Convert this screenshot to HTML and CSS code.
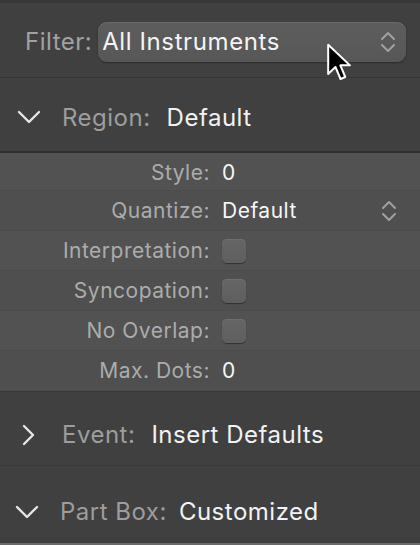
FILE: index.html
```html
<!DOCTYPE html>
<html lang="en">
<head>
    <meta charset="UTF-8">
    <meta name="viewport" content="width=device-width, initial-scale=1.0">
    <title>Score Inspector</title>
    <link rel="stylesheet" href="styles.css">
</head>
<body>
    <div class="inspector">
        <div class="filter-bar">
            <span class="filter-label">Filter:</span>
            <div class="popup">
                <span>All Instruments</span>
                <svg class="updown" width="16" height="24" viewBox="0 0 16 24">
                    <path d="M2 9 L8 3 L14 9 M2 15 L8 21 L14 15" fill="none" stroke="#a0a0a0" stroke-width="2" stroke-linecap="round" stroke-linejoin="round"/>
                </svg>
            </div>
        </div>

        <div class="section-header region">
            <svg class="disclosure" width="24" height="14" viewBox="0 0 24 14">
                <path d="M2 2 L12 12 L22 2" fill="none" stroke="#e6e6e6" stroke-width="2.4" stroke-linecap="round" stroke-linejoin="round"/>
            </svg>
            <span class="section-label">Region:</span>
            <span class="section-value">Default</span>
        </div>

        <div class="params">
            <div class="param-row">
                <span class="param-label">Style:</span>
                <span class="param-value">0</span>
            </div>
            <div class="param-row">
                <span class="param-label">Quantize:</span>
                <span class="param-value">Default</span>
                <svg class="updown" width="16" height="24" viewBox="0 0 16 24">
                    <path d="M2 9 L8 3 L14 9 M2 15 L8 21 L14 15" fill="none" stroke="#a0a0a0" stroke-width="2" stroke-linecap="round" stroke-linejoin="round"/>
                </svg>
            </div>
            <div class="param-row">
                <span class="param-label">Interpretation:</span>
                <span class="checkbox"></span>
            </div>
            <div class="param-row">
                <span class="param-label">Syncopation:</span>
                <span class="checkbox"></span>
            </div>
            <div class="param-row">
                <span class="param-label">No Overlap:</span>
                <span class="checkbox"></span>
            </div>
            <div class="param-row">
                <span class="param-label">Max. Dots:</span>
                <span class="param-value">0</span>
            </div>
        </div>

        <div class="section-header event">
            <svg class="disclosure closed" width="24" height="22" viewBox="0 0 24 22">
                <path d="M7 2 L16 11 L7 20" fill="none" stroke="#e6e6e6" stroke-width="2.4" stroke-linecap="round" stroke-linejoin="round"/>
            </svg>
            <span class="section-label">Event:</span>
            <span class="section-value">Insert Defaults</span>
        </div>

        <div class="section-header partbox">
            <svg class="disclosure" width="24" height="14" viewBox="0 0 24 14">
                <path d="M2 2 L12 12 L22 2" fill="none" stroke="#e6e6e6" stroke-width="2.4" stroke-linecap="round" stroke-linejoin="round"/>
            </svg>
            <span class="section-label">Part Box:</span>
            <span class="section-value">Customized</span>
        </div>

        <!-- mouse pointer resting on the filter popup -->
        <svg class="pointer" width="28" height="40" viewBox="0 0 15 22">
            <path d="M1 1 L1 17 L5 13.2 L7.8 19.8 L10.4 18.7 L7.7 12.3 L13 12.3 Z" fill="#000" stroke="#fff" stroke-width="1.1" stroke-linejoin="round"/>
        </svg>
    </div>
</body>
</html>
```

FILE: styles.css
```css
body {
    margin: 0;
    background-color: #404040;
    font-family: 'Inter', 'Noto Sans', sans-serif;
}
.inspector {
    position: relative;
    width: 420px;
    height: 545px;
    background-color: #404040;
    border-top: 3px solid #373737;
    border-bottom: 2px solid #6a6a6a;
    box-sizing: border-box;
    overflow: hidden;
}
.filter-bar {
    height: 75px;
    display: flex;
    align-items: center;
    padding: 3px 14px 0 25px;
    box-sizing: border-box;
    border-bottom: 1px solid #363636;
}
.filter-label {
    color: #a2a2a2;
    font-size: 24px;
    letter-spacing: 0.5px;
    margin-right: 6px;
}
.popup {
    flex: 1;
    height: 40px;
    display: flex;
    align-items: center;
    justify-content: space-between;
    padding: 0 10px 0 4px;
    background: linear-gradient(#5d5d5d, #575757);
    border-radius: 9px;
    box-shadow: inset 0 1px 0 #6a6a6a, 0 1px 2px rgba(0, 0, 0, 0.35);
    color: #f4f4f4;
    font-size: 24px;
    letter-spacing: 0.6px;
}
.section-header {
    display: flex;
    align-items: center;
    height: 75px;
    box-sizing: border-box;
    font-size: 24px;
    letter-spacing: 0.5px;
}
.region {
    border-bottom: 2px solid #2f2f2f;
    padding-top: 5px;
}
.event {
    border-top: 1px solid #383838;
    border-bottom: 1px solid #393939;
    padding-top: 12px;
}
.partbox {
    height: 73px;
    padding-top: 18px;
}
.disclosure {
    width: 24px;
    margin-left: 17px;
    margin-right: 21px;
}
.partbox .disclosure {
    margin-left: 15px;
    margin-right: 21px;
}
.section-label {
    color: #9d9d9d;
    margin-right: 16px;
}
.partbox .section-label {
    margin-right: 12px;
}
.section-value {
    color: #f2f2f2;
}
.params {
    background-color: #525252;
}
.param-row {
    display: grid;
    grid-template-columns: 210px 1fr auto;
    align-items: center;
    column-gap: 12px;
    height: 40px;
    padding-right: 23px;
    font-size: 21px;
    letter-spacing: 0.5px;
    border-bottom: 1px solid #4c4c4c;
    box-sizing: border-box;
}
.param-row:first-child {
    height: 38px;
    padding-top: 2px;
}
.param-row:nth-child(even) {
    background-color: #4f4f4f;
}
.param-label {
    text-align: right;
    color: #acacac;
}
.param-value {
    color: #f6f6f6;
}
.checkbox {
    width: 24px;
    height: 24px;
    border-radius: 5px;
    background: linear-gradient(#666, #5e5e5e);
    box-shadow: 0 1px 1px rgba(0, 0, 0, 0.4), inset 0 1px 0 #6e6e6e;
}
.pointer {
    position: absolute;
    left: 326px;
    top: 40px;
}
```
